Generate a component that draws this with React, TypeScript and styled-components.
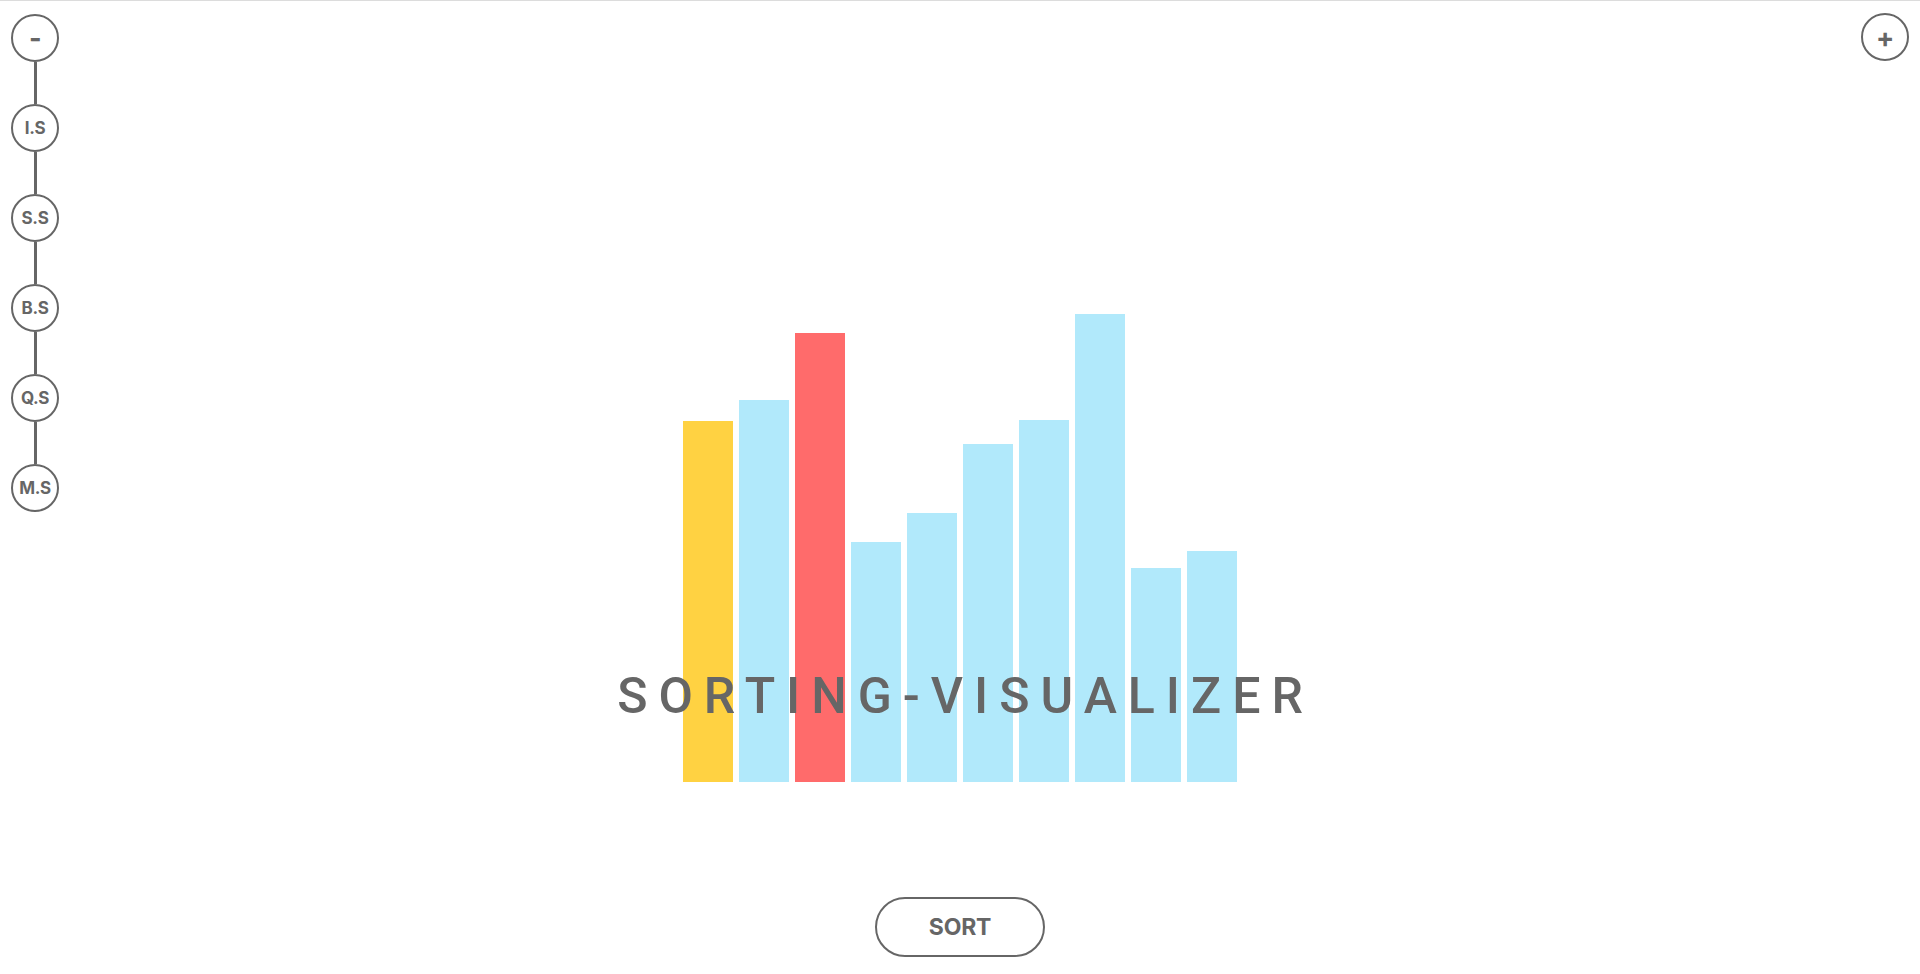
import React from 'react';
import styled, { createGlobalStyle } from 'styled-components';

const GlobalStyle = createGlobalStyle`
  html, body {
    margin: 0;
    padding: 0;
    background: #fff;
  }
  body {
    font-family: Inter, Roboto, "Liberation Sans", sans-serif;
    color: #666;
  }
`;

export const Page = styled.div`
  height: 974px;
  box-sizing: border-box;
  border-top: 1px solid #dcdcdc;
  display: grid;
  grid-template-columns: 70px 1fr 70px;
  overflow: hidden;
`;

export const SideNav = styled.nav`
  display: flex;
  flex-direction: column;
  align-items: center;
  padding-top: 13px;
`;

export const Link = styled.div`
  width: 3px;
  height: 42px;
  background: #666;
`;

export const Circle = styled.button<{ $big?: boolean }>`
  width: 48px;
  height: 48px;
  box-sizing: border-box;
  border-radius: 50%;
  border: 2.5px solid #666;
  background: #fff;
  color: #666;
  padding: 0;
  display: flex;
  align-items: center;
  justify-content: center;
  font-family: Inter, Roboto, sans-serif;
  font-weight: 700;
  font-size: ${(p) => (p.$big ? '27px' : '17px')};
  letter-spacing: -0.02em;
  line-height: 1;
  cursor: pointer;
`;

export const RightCol = styled.div`
  display: flex;
  justify-content: center;
  padding-top: 12px;
`;

export const Main = styled.main`
  display: flex;
  flex-direction: column;
  align-items: center;
`;

export const Stage = styled.div`
  display: grid;
  margin-top: 312px;
  justify-items: center;
`;

export const Bars = styled.div`
  grid-area: 1 / 1;
  display: flex;
  align-items: flex-end;
  gap: 6px;
  height: 469px;
`;

const barColors: Record<string, string> = {
  pivot: '#ffd242',
  active: '#ff6b6b',
  idle: '#b1e9fb',
};

export const Bar = styled.div<{ $h: number; $state: string }>`
  width: 50px;
  height: ${(p) => p.$h}px;
  background: ${(p) => barColors[p.$state]};
`;

export const Title = styled.h1`
  grid-area: 1 / 1;
  align-self: end;
  margin: 0 -0.22em 61px 0;
  font-family: Roboto, Inter, sans-serif;
  font-weight: 500;
  font-size: 50px;
  line-height: 1;
  letter-spacing: 0.22em;
  white-space: nowrap;
  color: #666;
  position: relative;
`;

export const SortButton = styled.button`
  margin-top: 115px;
  width: 170px;
  height: 60px;
  box-sizing: border-box;
  border: 2px solid #666;
  border-radius: 30px;
  background: #fff;
  color: #666;
  font-family: Inter, Roboto, sans-serif;
  font-weight: 700;
  font-size: 23px;
  letter-spacing: -0.01em;
  cursor: pointer;
`;

const algorithms = ['I.S', 'S.S', 'B.S', 'Q.S', 'M.S'];

const bars: { h: number; state: string }[] = [
  { h: 361, state: 'pivot' },
  { h: 382, state: 'idle' },
  { h: 449, state: 'active' },
  { h: 240, state: 'idle' },
  { h: 269, state: 'idle' },
  { h: 338, state: 'idle' },
  { h: 362, state: 'idle' },
  { h: 468, state: 'idle' },
  { h: 214, state: 'idle' },
  { h: 231, state: 'idle' },
];

export default function App(): JSX.Element {
  return (
    <>
      <GlobalStyle />
      <Page>
        <SideNav>
          <Circle $big>-</Circle>
          {algorithms.map((a) => (
            <React.Fragment key={a}>
              <Link />
              <Circle>{a}</Circle>
            </React.Fragment>
          ))}
        </SideNav>
        <Main>
          <Stage>
            <Bars>
              {bars.map((b, i) => (
                <Bar key={i} $h={b.h} $state={b.state} />
              ))}
            </Bars>
            <Title>SORTING-VISUALIZER</Title>
          </Stage>
          <SortButton>SORT</SortButton>
        </Main>
        <RightCol>
          <Circle $big>+</Circle>
        </RightCol>
      </Page>
    </>
  );
}
